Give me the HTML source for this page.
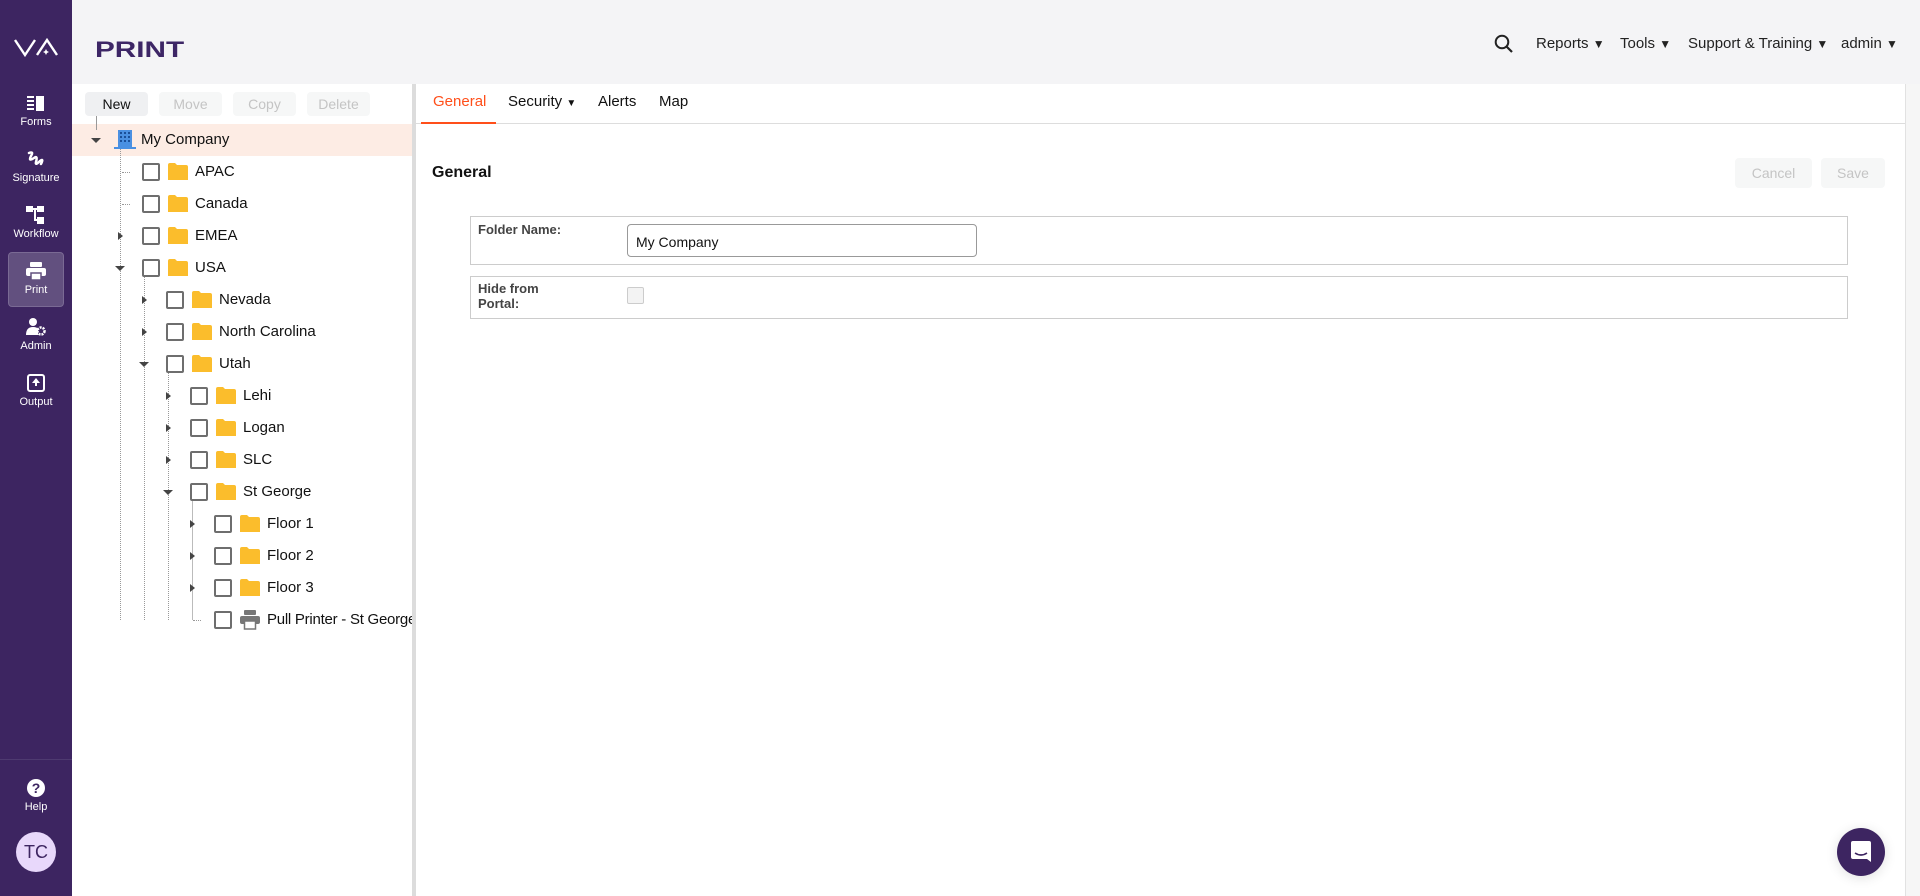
<!DOCTYPE html>
<html><head><meta charset="utf-8"><style>
*{box-sizing:border-box;margin:0;padding:0}
body{width:1920px;height:896px;overflow:hidden;font-family:"Liberation Sans",sans-serif;background:#fff;position:relative;color:#111}
.abs{position:absolute}
#side{left:0;top:0;width:72px;height:896px;background:#3d2561}
.nav{position:absolute;left:0;width:72px;text-align:center;color:#fff;font-size:11px}
.nav svg{display:block;margin:0 auto 4px}
#top{left:72px;top:0;width:1848px;height:84px;background:#f4f4f6}
.menu{position:absolute;top:35px;font-size:15px;color:#222;white-space:nowrap}
.menu span{font-size:12px}
.btn{position:absolute;top:92px;height:24px;width:63px;border-radius:4px;background:#f6f7f7;color:#c4c4c4;font-size:14px;text-align:center;line-height:24px}
.row{position:absolute;left:72px;width:340px;height:32px}
.cb{position:absolute;width:18px;height:18px;border:2px solid #6e6e6e;border-radius:2px;top:7px}
.fd{position:absolute;top:7px;width:20px;height:17px}
.tx{position:absolute;top:7px;font-size:15px;color:#111;white-space:nowrap}
.tr{position:absolute;top:12px;width:0;height:0;border-top:4px solid transparent;border-bottom:4px solid transparent;border-left:5px solid #444}
.td{position:absolute;top:14px;width:0;height:0;border-left:5px solid transparent;border-right:5px solid transparent;border-top:5px solid #444}
.vl{position:absolute;width:0;border-left:1px dotted #999}
.hl{position:absolute;height:0;width:8px;border-top:1px dotted #999;top:16px}
</style></head><body>
<div id="side" class="abs">
 <svg class="abs" style="left:14px;top:38px" width="44" height="20" viewBox="0 0 44 20"><path d="M1 2 L11 17 L21 2 M23 17 L33 2 L43 17" fill="none" stroke="#fff" stroke-width="2.4"/><path d="M32 11 l1 2 l2 1 l-2 1 l-1 2 l-1 -2 l-2 -1 l2 -1z" fill="#fff"/></svg>
 <div class="nav" style="top:96px"><svg width="18" height="16" viewBox="0 0 18 16"><rect x="0" y="0" width="7" height="2" fill="#fff"/><rect x="0" y="4" width="7" height="2" fill="#fff"/><rect x="0" y="8" width="7" height="2" fill="#fff"/><rect x="0" y="12" width="7" height="2" fill="#fff"/><rect x="9" y="0" width="8" height="15" fill="#fff"/></svg>Forms</div>
 <div class="nav" style="top:150px"><svg width="20" height="18" viewBox="0 0 20 18"><path d="M3 3 Q8 1 5 6 Q2 12 8 8 Q12 5 10 12 Q9 16 14 11 Q18 8 15 14" fill="none" stroke="#fff" stroke-width="2.5" stroke-linecap="round"/></svg>Signature</div>
 <div class="nav" style="top:206px"><svg width="20" height="18" viewBox="0 0 20 18"><rect x="0" y="0" width="7" height="6" fill="#fff"/><rect x="11" y="0" width="7" height="6" fill="#fff"/><rect x="11" y="11" width="7" height="7" fill="#fff"/><path d="M7 3 H11 M9 3 V14 H11" stroke="#fff" stroke-width="2" fill="none"/></svg>Workflow</div>
 <div class="abs" style="left:8px;top:252px;width:56px;height:55px;background:#62507f;border-radius:4px;border:1px solid #7a6a94"></div>
 <div class="nav" style="top:262px"><svg width="20" height="18" viewBox="0 0 20 18"><rect x="4" y="0" width="12" height="5" rx="1" fill="#fff"/><rect x="0" y="6" width="20" height="8" rx="2" fill="#fff"/><rect x="5" y="11" width="10" height="7" fill="#fff" stroke="#62507f" stroke-width="1.5"/></svg>Print</div>
 <div class="nav" style="top:318px"><svg width="20" height="18" viewBox="0 0 20 18"><circle cx="7" cy="4" r="4" fill="#fff"/><path d="M0 17 Q0 9 7 9 Q11 9 12 11 L12 17z" fill="#fff"/><circle cx="15" cy="13" r="3.5" fill="none" stroke="#fff" stroke-width="2.5" stroke-dasharray="2 1"/></svg>Admin</div>
 <div class="nav" style="top:374px"><svg width="18" height="18" viewBox="0 0 18 18"><rect x="1" y="1" width="16" height="16" rx="2" fill="none" stroke="#fff" stroke-width="2"/><path d="M9 4 L13 9 H10 V12 H8 V9 H5z" fill="#fff"/></svg>Output</div>
 <div class="abs" style="left:0;top:759px;width:72px;border-top:1px solid #4e3a70"></div>
 <div class="nav" style="top:779px"><svg width="18" height="18" viewBox="0 0 18 18"><circle cx="9" cy="9" r="9" fill="#fff"/><text x="9" y="14" text-anchor="middle" font-size="14" font-weight="bold" fill="#3d2561" font-family="Liberation Sans">?</text></svg>Help</div>
 <div class="abs" style="left:16px;top:832px;width:40px;height:40px;border-radius:50%;background:#e8d8fb;color:#3d2561;font-size:18px;text-align:center;line-height:40px">TC</div>
</div>
<div id="top" class="abs"></div>
<div class="abs" style="left:95px;top:37px;font-size:22px;font-weight:bold;color:#3d2666;transform:scaleX(1.35);transform-origin:left top">PRINT</div>
<svg class="abs" style="left:1494px;top:34px" width="20" height="20" viewBox="0 0 20 20"><circle cx="8" cy="8" r="6.3" fill="none" stroke="#222" stroke-width="2"/><path d="M12.5 12.5 L18 18" stroke="#222" stroke-width="2.2"/></svg>
<div class="menu" style="left:1536px">Reports <span>▼</span></div>
<div class="menu" style="left:1620px">Tools <span>▼</span></div>
<div class="menu" style="left:1688px">Support &amp; Training <span>▼</span></div>
<div class="menu" style="left:1841px">admin <span>▼</span></div>
<div class="abs" style="left:1905px;top:84px;width:15px;height:812px;background:#f6f6f6;border-left:1px solid #e2e2e2"></div>
<div class="btn" style="left:85px;background:#eff0f2;color:#111">New</div>
<div class="btn" style="left:159px">Move</div>
<div class="btn" style="left:233px">Copy</div>
<div class="btn" style="left:307px">Delete</div>
<div class="abs" style="left:412px;top:84px;width:4px;height:812px;background:#dcdcdc"></div>
<div class="abs" style="left:72px;top:124px;width:340px;height:32px;background:#fdece4"></div>
<div class="vl" style="left:96px;top:116px;height:14px;border-left-style:solid"></div>
<div class="vl" style="left:120px;top:148px;height:472px"></div>
<div class="vl" style="left:144px;top:276px;height:344px"></div>
<div class="vl" style="left:168px;top:372px;height:248px"></div>
<div class="vl" style="left:192px;top:500px;height:120px;border-left-style:solid;border-color:#bbb"></div>
<div class="row" style="top:124px"><div class="td" style="left:19px"></div><svg class="abs" style="left:42px;top:6px" width="22" height="20" viewBox="0 0 22 20"><rect x="4" y="0" width="14" height="17" fill="#4a90e2"/><g fill="#1a4f99"><rect x="6" y="2" width="2" height="2"/><rect x="10" y="2" width="2" height="2"/><rect x="14" y="2" width="2" height="2"/><rect x="6" y="6" width="2" height="2"/><rect x="10" y="6" width="2" height="2"/><rect x="14" y="6" width="2" height="2"/><rect x="6" y="10" width="2" height="2"/><rect x="10" y="10" width="2" height="2"/><rect x="14" y="10" width="2" height="2"/></g><rect x="0" y="17" width="22" height="2" fill="#4a90e2"/></svg><div class="tx" style="left:69px">My Company</div></div>
<div class="row" style="top:156px"><div class="hl" style="left:50px"></div><div class="cb" style="left:70px"></div><svg class="fd" style="left:96px" viewBox="0 0 20 17"><path d="M0 2 Q0 0 2 0 H7 L9 2 H18 Q20 2 20 4 V17 H0z" fill="#fbbd2c"/></svg><div class="tx" style="left:123px">APAC</div></div>
<div class="row" style="top:188px"><div class="hl" style="left:50px"></div><div class="cb" style="left:70px"></div><svg class="fd" style="left:96px" viewBox="0 0 20 17"><path d="M0 2 Q0 0 2 0 H7 L9 2 H18 Q20 2 20 4 V17 H0z" fill="#fbbd2c"/></svg><div class="tx" style="left:123px">Canada</div></div>
<div class="row" style="top:220px"><div class="tr" style="left:46px"></div><div class="cb" style="left:70px"></div><svg class="fd" style="left:96px" viewBox="0 0 20 17"><path d="M0 2 Q0 0 2 0 H7 L9 2 H18 Q20 2 20 4 V17 H0z" fill="#fbbd2c"/></svg><div class="tx" style="left:123px">EMEA</div></div>
<div class="row" style="top:252px"><div class="td" style="left:43px"></div><div class="cb" style="left:70px"></div><svg class="fd" style="left:96px" viewBox="0 0 20 17"><path d="M0 2 Q0 0 2 0 H7 L9 2 H18 Q20 2 20 4 V17 H0z" fill="#fbbd2c"/></svg><div class="tx" style="left:123px">USA</div></div>
<div class="row" style="top:284px"><div class="tr" style="left:70px"></div><div class="cb" style="left:94px"></div><svg class="fd" style="left:120px" viewBox="0 0 20 17"><path d="M0 2 Q0 0 2 0 H7 L9 2 H18 Q20 2 20 4 V17 H0z" fill="#fbbd2c"/></svg><div class="tx" style="left:147px">Nevada</div></div>
<div class="row" style="top:316px"><div class="tr" style="left:70px"></div><div class="cb" style="left:94px"></div><svg class="fd" style="left:120px" viewBox="0 0 20 17"><path d="M0 2 Q0 0 2 0 H7 L9 2 H18 Q20 2 20 4 V17 H0z" fill="#fbbd2c"/></svg><div class="tx" style="left:147px">North Carolina</div></div>
<div class="row" style="top:348px"><div class="td" style="left:67px"></div><div class="cb" style="left:94px"></div><svg class="fd" style="left:120px" viewBox="0 0 20 17"><path d="M0 2 Q0 0 2 0 H7 L9 2 H18 Q20 2 20 4 V17 H0z" fill="#fbbd2c"/></svg><div class="tx" style="left:147px">Utah</div></div>
<div class="row" style="top:380px"><div class="tr" style="left:94px"></div><div class="cb" style="left:118px"></div><svg class="fd" style="left:144px" viewBox="0 0 20 17"><path d="M0 2 Q0 0 2 0 H7 L9 2 H18 Q20 2 20 4 V17 H0z" fill="#fbbd2c"/></svg><div class="tx" style="left:171px">Lehi</div></div>
<div class="row" style="top:412px"><div class="tr" style="left:94px"></div><div class="cb" style="left:118px"></div><svg class="fd" style="left:144px" viewBox="0 0 20 17"><path d="M0 2 Q0 0 2 0 H7 L9 2 H18 Q20 2 20 4 V17 H0z" fill="#fbbd2c"/></svg><div class="tx" style="left:171px">Logan</div></div>
<div class="row" style="top:444px"><div class="tr" style="left:94px"></div><div class="cb" style="left:118px"></div><svg class="fd" style="left:144px" viewBox="0 0 20 17"><path d="M0 2 Q0 0 2 0 H7 L9 2 H18 Q20 2 20 4 V17 H0z" fill="#fbbd2c"/></svg><div class="tx" style="left:171px">SLC</div></div>
<div class="row" style="top:476px"><div class="td" style="left:91px"></div><div class="cb" style="left:118px"></div><svg class="fd" style="left:144px" viewBox="0 0 20 17"><path d="M0 2 Q0 0 2 0 H7 L9 2 H18 Q20 2 20 4 V17 H0z" fill="#fbbd2c"/></svg><div class="tx" style="left:171px">St George</div></div>
<div class="row" style="top:508px"><div class="tr" style="left:118px"></div><div class="cb" style="left:142px"></div><svg class="fd" style="left:168px" viewBox="0 0 20 17"><path d="M0 2 Q0 0 2 0 H7 L9 2 H18 Q20 2 20 4 V17 H0z" fill="#fbbd2c"/></svg><div class="tx" style="left:195px">Floor 1</div></div>
<div class="row" style="top:540px"><div class="tr" style="left:118px"></div><div class="cb" style="left:142px"></div><svg class="fd" style="left:168px" viewBox="0 0 20 17"><path d="M0 2 Q0 0 2 0 H7 L9 2 H18 Q20 2 20 4 V17 H0z" fill="#fbbd2c"/></svg><div class="tx" style="left:195px">Floor 2</div></div>
<div class="row" style="top:572px"><div class="tr" style="left:118px"></div><div class="cb" style="left:142px"></div><svg class="fd" style="left:168px" viewBox="0 0 20 17"><path d="M0 2 Q0 0 2 0 H7 L9 2 H18 Q20 2 20 4 V17 H0z" fill="#fbbd2c"/></svg><div class="tx" style="left:195px">Floor 3</div></div>
<div class="row" style="top:604px;overflow:hidden"><div class="hl" style="left:121px"></div><div class="cb" style="left:142px"></div><svg class="abs" style="left:168px;top:6px" width="20" height="20" viewBox="0 0 20 20"><rect x="4" y="0" width="12" height="5" rx="1" fill="#777"/><rect x="0" y="6" width="20" height="8" rx="2" fill="#777"/><rect x="4.5" y="11" width="11" height="8" fill="#fff" stroke="#777" stroke-width="1.5"/></svg><div class="tx" style="left:195px;letter-spacing:-0.25px">Pull Printer - St George</div></div>
<div class="abs" style="left:416px;top:123px;width:1489px;border-top:1px solid #ddd"></div>
<div class="abs" style="left:433px;top:93px;font-size:15px;color:#ff4f1a">General</div>
<div class="abs" style="left:421px;top:122px;width:75px;height:2px;background:#ff4f1a"></div>
<div class="abs" style="left:508px;top:93px;font-size:15px;white-space:nowrap">Security <span style="font-size:10px">▼</span></div>
<div class="abs" style="left:598px;top:93px;font-size:15px">Alerts</div>
<div class="abs" style="left:659px;top:93px;font-size:15px">Map</div>
<div class="abs" style="left:432px;top:164px;font-size:16px;font-weight:bold">General</div>
<div class="abs" style="left:1735px;top:158px;width:77px;height:30px;background:#f6f7f7;border-radius:4px;color:#c4c4c4;font-size:14px;text-align:center;line-height:30px">Cancel</div>
<div class="abs" style="left:1821px;top:158px;width:64px;height:30px;background:#f6f7f7;border-radius:4px;color:#c4c4c4;font-size:14px;text-align:center;line-height:30px">Save</div>
<div class="abs" style="left:470px;top:216px;width:1378px;height:49px;border:1px solid #ccc"></div>
<div class="abs" style="left:478px;top:222px;font-size:13px;font-weight:bold;color:#444">Folder Name:</div>
<div class="abs" style="left:627px;top:224px;width:350px;height:33px;border:1px solid #999;border-radius:4px;font-size:14px;padding:9px 8px">My Company</div>
<div class="abs" style="left:470px;top:276px;width:1378px;height:43px;border:1px solid #ccc"></div>
<div class="abs" style="left:478px;top:281px;font-size:13px;font-weight:bold;color:#444;line-height:15px">Hide from<br>Portal:</div>
<div class="abs" style="left:627px;top:287px;width:17px;height:17px;border:1px solid #ccc;border-radius:2px;background:#f3f3f3"></div>
<div class="abs" style="left:1837px;top:828px;width:48px;height:48px;border-radius:50%;background:#3d2561;box-shadow:0 2px 12px rgba(0,0,0,.12)"></div>
<svg class="abs" style="left:1850px;top:840px" width="22" height="24" viewBox="0 0 22 24"><path d="M3 1 H19 Q21 1 21 3 V22 L17 19 H3 Q1 19 1 17 V3 Q1 1 3 1z" fill="#fff"/><path d="M5 13 Q11 17 17 13" stroke="#3d2561" stroke-width="1.6" fill="none"/></svg>
</body></html>
